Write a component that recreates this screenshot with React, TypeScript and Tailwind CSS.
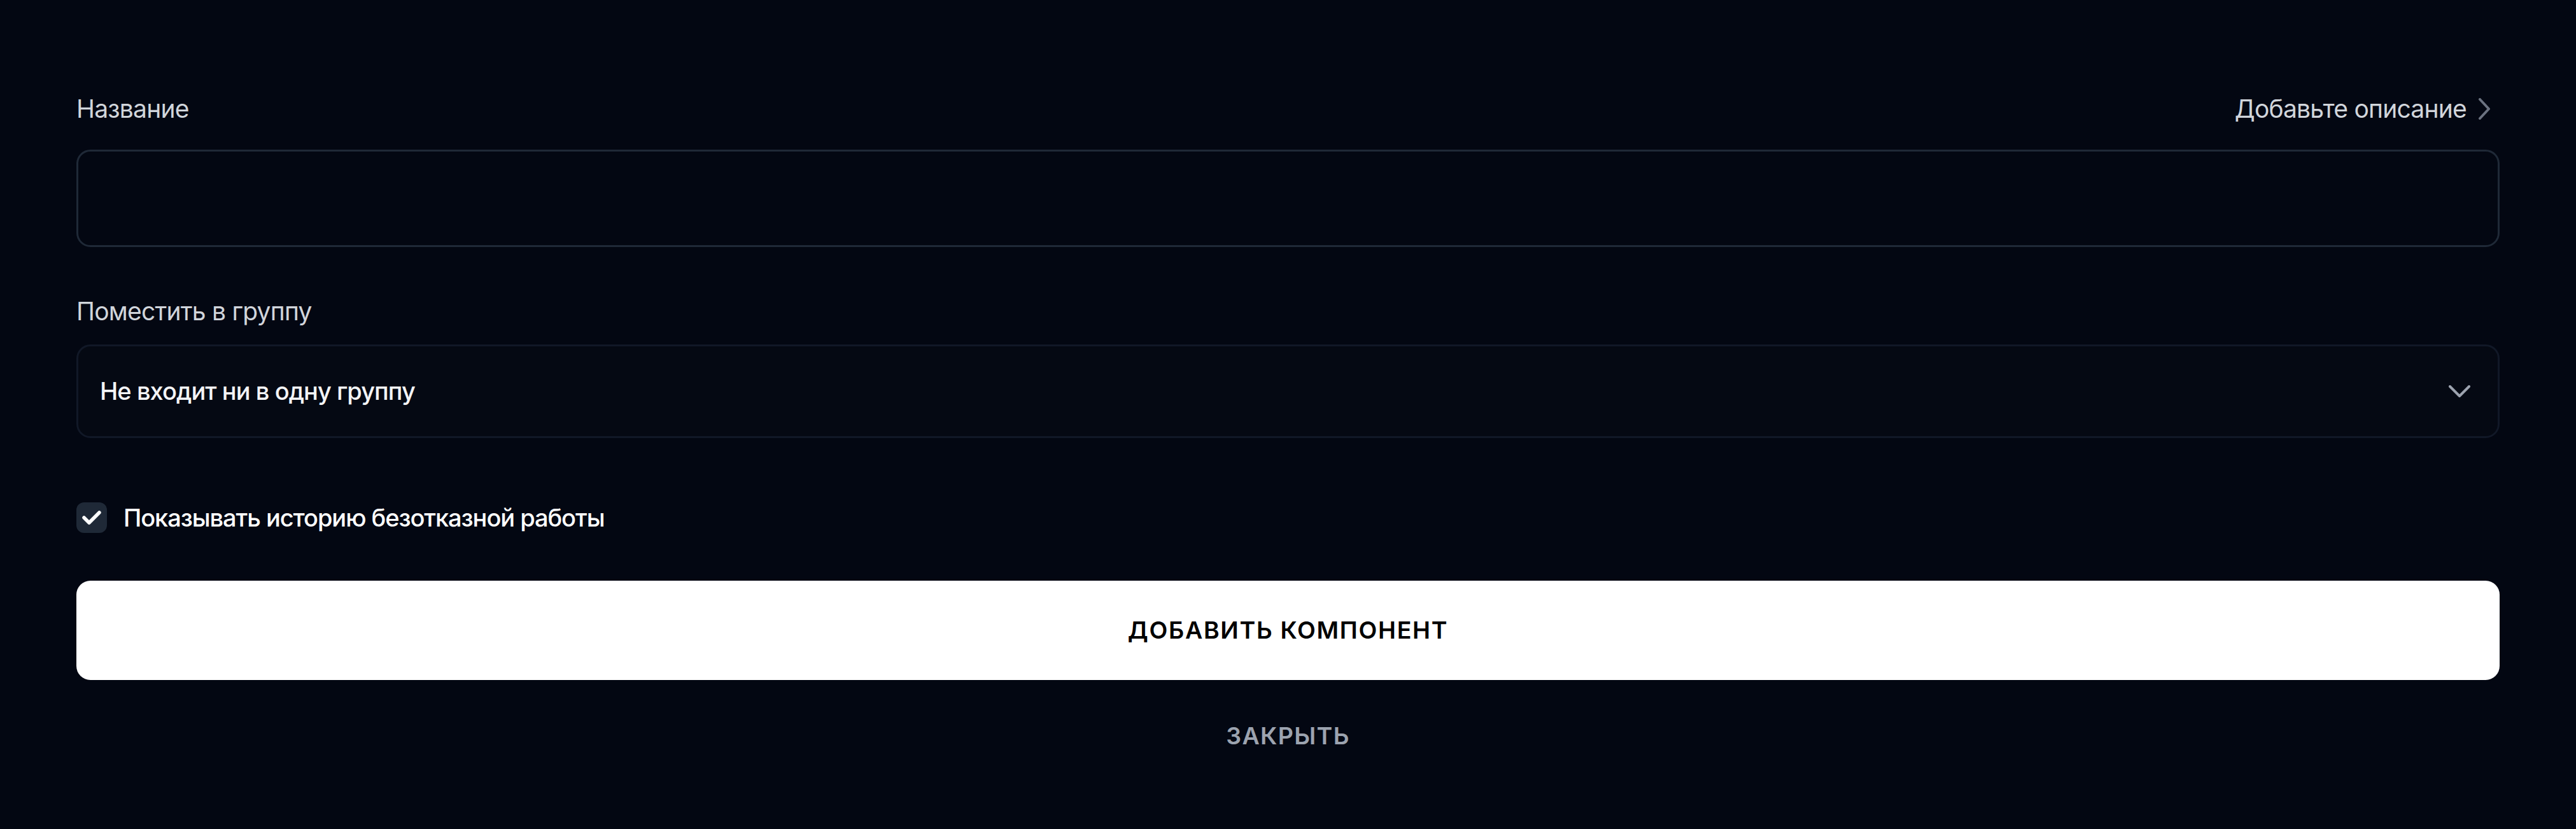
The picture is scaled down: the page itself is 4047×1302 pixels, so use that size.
import React from "react";

export default function App() {
  return (
    <div
      className="min-h-screen w-full bg-[#030712] px-[120px] pt-[147px] pb-[100px]"
      style={{ fontFamily: "Inter, 'Noto Sans', sans-serif" }}
    >
      <div className="flex h-[48px] items-center justify-between">
        <span className="text-[39px] leading-[48px] font-normal text-[#d1d5db] tracking-[-0.02em]">Название</span>
        <button className="flex items-center gap-[18px] text-[39px] leading-[48px] font-normal text-[#d1d5db] tracking-[-0.02em]">
          <span>Добавьте описание</span>
          <svg width="20" height="34" viewBox="0 0 20 34" fill="none" className="mr-[14px]">
            <polyline points="3,2 17,17 3,32" stroke="#6b7280" strokeWidth="4" strokeLinecap="round" strokeLinejoin="round" />
          </svg>
        </button>
      </div>

      <div className="mt-[40px] h-[153px] w-full rounded-[22px] border-[3px] border-[#1f2937] bg-[#030712]" />

      <div className="mt-[77px] h-[48px] text-[39px] leading-[48px] font-normal text-[#d1d5db] tracking-[-0.02em]">
        Поместить в группу
      </div>

      <div className="mt-[28px] flex h-[147px] w-full items-center justify-between rounded-[22px] border-[3px] border-[#111827] bg-[#050913] pl-[34px] pr-[43px]">
        <span className="text-[38px] font-medium text-[#f3f4f6] tracking-[-0.025em]">Не входит ни в одну группу</span>
        <svg width="34" height="20" viewBox="0 0 34 20" fill="none">
          <polyline points="2,2 17,17 32,2" stroke="#9ca3af" strokeWidth="4" strokeLinecap="round" strokeLinejoin="round" />
        </svg>
      </div>

      <label className="mt-[101px] flex items-center gap-[26px]">
        <span className="flex h-[48px] w-[48px] items-center justify-center rounded-[12px] bg-[#1f2937]">
          <svg width="30" height="22" viewBox="0 0 30 22" fill="none">
            <polyline points="3,11 11,19 27,3" stroke="#ffffff" strokeWidth="5.5" strokeLinecap="round" strokeLinejoin="round" />
          </svg>
        </span>
        <span className="text-[38px] leading-[48px] font-medium text-white tracking-[-0.028em]">Показывать историю безотказной работы</span>
      </label>

      <button className="mt-[75px] flex h-[156px] w-full items-center justify-center rounded-[22px] bg-white text-[37.5px] font-semibold uppercase tracking-[0.045em] text-black">
        Добавить компонент
      </button>

      <div className="mt-[64px] flex justify-center">
        <button className="text-[37.5px] leading-[48px] font-semibold uppercase tracking-[0.035em] text-[#9ca3af]">
          Закрыть
        </button>
      </div>
    </div>
  );
}
